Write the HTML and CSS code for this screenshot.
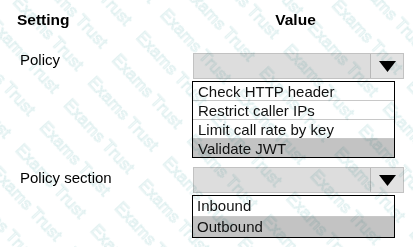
FILE: index.html
```html
<!DOCTYPE html>
<html lang="en">
<head>
  <meta charset="UTF-8" />
  <meta name="viewport" content="width=device-width, initial-scale=1.0" />
  <title>Policy settings</title>
  <link rel="stylesheet" href="styles.css">
</head>
<body>
  <div class="sheet">
    <div class="row head">
      <div class="label">Setting</div>
      <div class="value">Value</div>
    </div>

    <div class="row">
      <div class="label">Policy</div>
      <div class="value">
        <div class="select">
          <span class="field"></span>
          <span class="btn">
            <svg width="17" height="11" viewBox="0 0 17 11"><polygon points="0,0 17,0 8.5,11" fill="#000"/></svg>
          </span>
        </div>
        <ul class="list">
          <li>Check HTTP header</li>
          <li>Restrict caller IPs</li>
          <li>Limit call rate by key</li>
          <li class="selected">Validate JWT</li>
        </ul>
      </div>
    </div>

    <div class="row low">
      <div class="label">Policy section</div>
      <div class="value">
        <div class="select">
          <span class="field"></span>
          <span class="btn">
            <svg width="17" height="11" viewBox="0 0 17 11"><polygon points="0,0 17,0 8.5,11" fill="#000"/></svg>
          </span>
        </div>
        <ul class="list tall">
          <li>Inbound</li>
          <li class="selected">Outbound</li>
        </ul>
      </div>
    </div>
  </div>

  <!-- watermark over the whole sheet -->
  <svg class="watermark" width="413" height="247" aria-hidden="true">
    <defs>
      <pattern id="wm" width="110" height="33" patternUnits="userSpaceOnUse" patternTransform="rotate(47) translate(10 4)">
        <text x="0" y="22" class="wm-text">Exams Trust</text>
      </pattern>
    </defs>
    <rect width="100%" height="100%" fill="url(#wm)"/>
  </svg>
</body>
</html>
```

FILE: styles.css
```css
* {
  box-sizing: border-box;
}
body {
  margin: 0;
  font-family: 'Liberation Sans', Arial, sans-serif;
  background: #fff;
  color: #000;
  width: 413px;
  height: 247px;
  overflow: hidden;
  position: relative;
}
.sheet {
  padding: 11px 9px 0 17px;
}
.row {
  display: grid;
  grid-template-columns: 176px 211px;
  align-items: start;
}
.label {
  font-size: 15px;
  line-height: 17px;
  padding-left: 3px;
}
.head {
  font-weight: bold;
  font-size: 15.5px;
  line-height: 18px;
  margin-bottom: 22px;
}
.head .label {
  font-size: 15.5px;
  line-height: 18px;
  padding-left: 0;
}
.head .value {
  text-align: center;
  padding-right: 6px;
}
.low {
  margin-top: 7px;
}
.low .label {
  padding-top: 4px;
}
.select {
  display: flex;
  height: 26px;
  margin-top: 2px;
  border: 1px solid #c2c2c2;
  background: #dddddd;
}
.field {
  flex: 1;
}
.btn {
  width: 33px;
  border-left: 1px solid #b8b8b8;
  background: #e2e2e2;
  display: flex;
  align-items: center;
  justify-content: center;
  padding-left: 1px;
}
.list {
  list-style: none;
  margin: 2px 0 0 -1px;
  padding: 0;
  width: 203px;
  border: 1px solid #000;
  background: #fff;
}
.list li {
  font-size: 15px;
  line-height: 18px;
  height: 19px;
  padding: 1px 5px 0;
  border-bottom: 1px solid #c8c8c8;
  color: #111;
}
.list li:last-child {
  border-bottom: none;
  height: 18px;
}
.list.tall li {
  line-height: 20px;
  height: 21px;
  padding: 0 4px;
}
.list.tall li:last-child {
  height: 20px;
}
.list li.selected {
  background: #c3c3c3;
}
.watermark {
  position: absolute;
  top: 0;
  left: 0;
  pointer-events: none;
  mix-blend-mode: multiply;
}
.wm-text {
  font-family: 'Liberation Sans', Arial, sans-serif;
  font-size: 17px;
  fill: #f4fafa;
  stroke: #d2e9e9;
  stroke-width: 0.5;
}
```
